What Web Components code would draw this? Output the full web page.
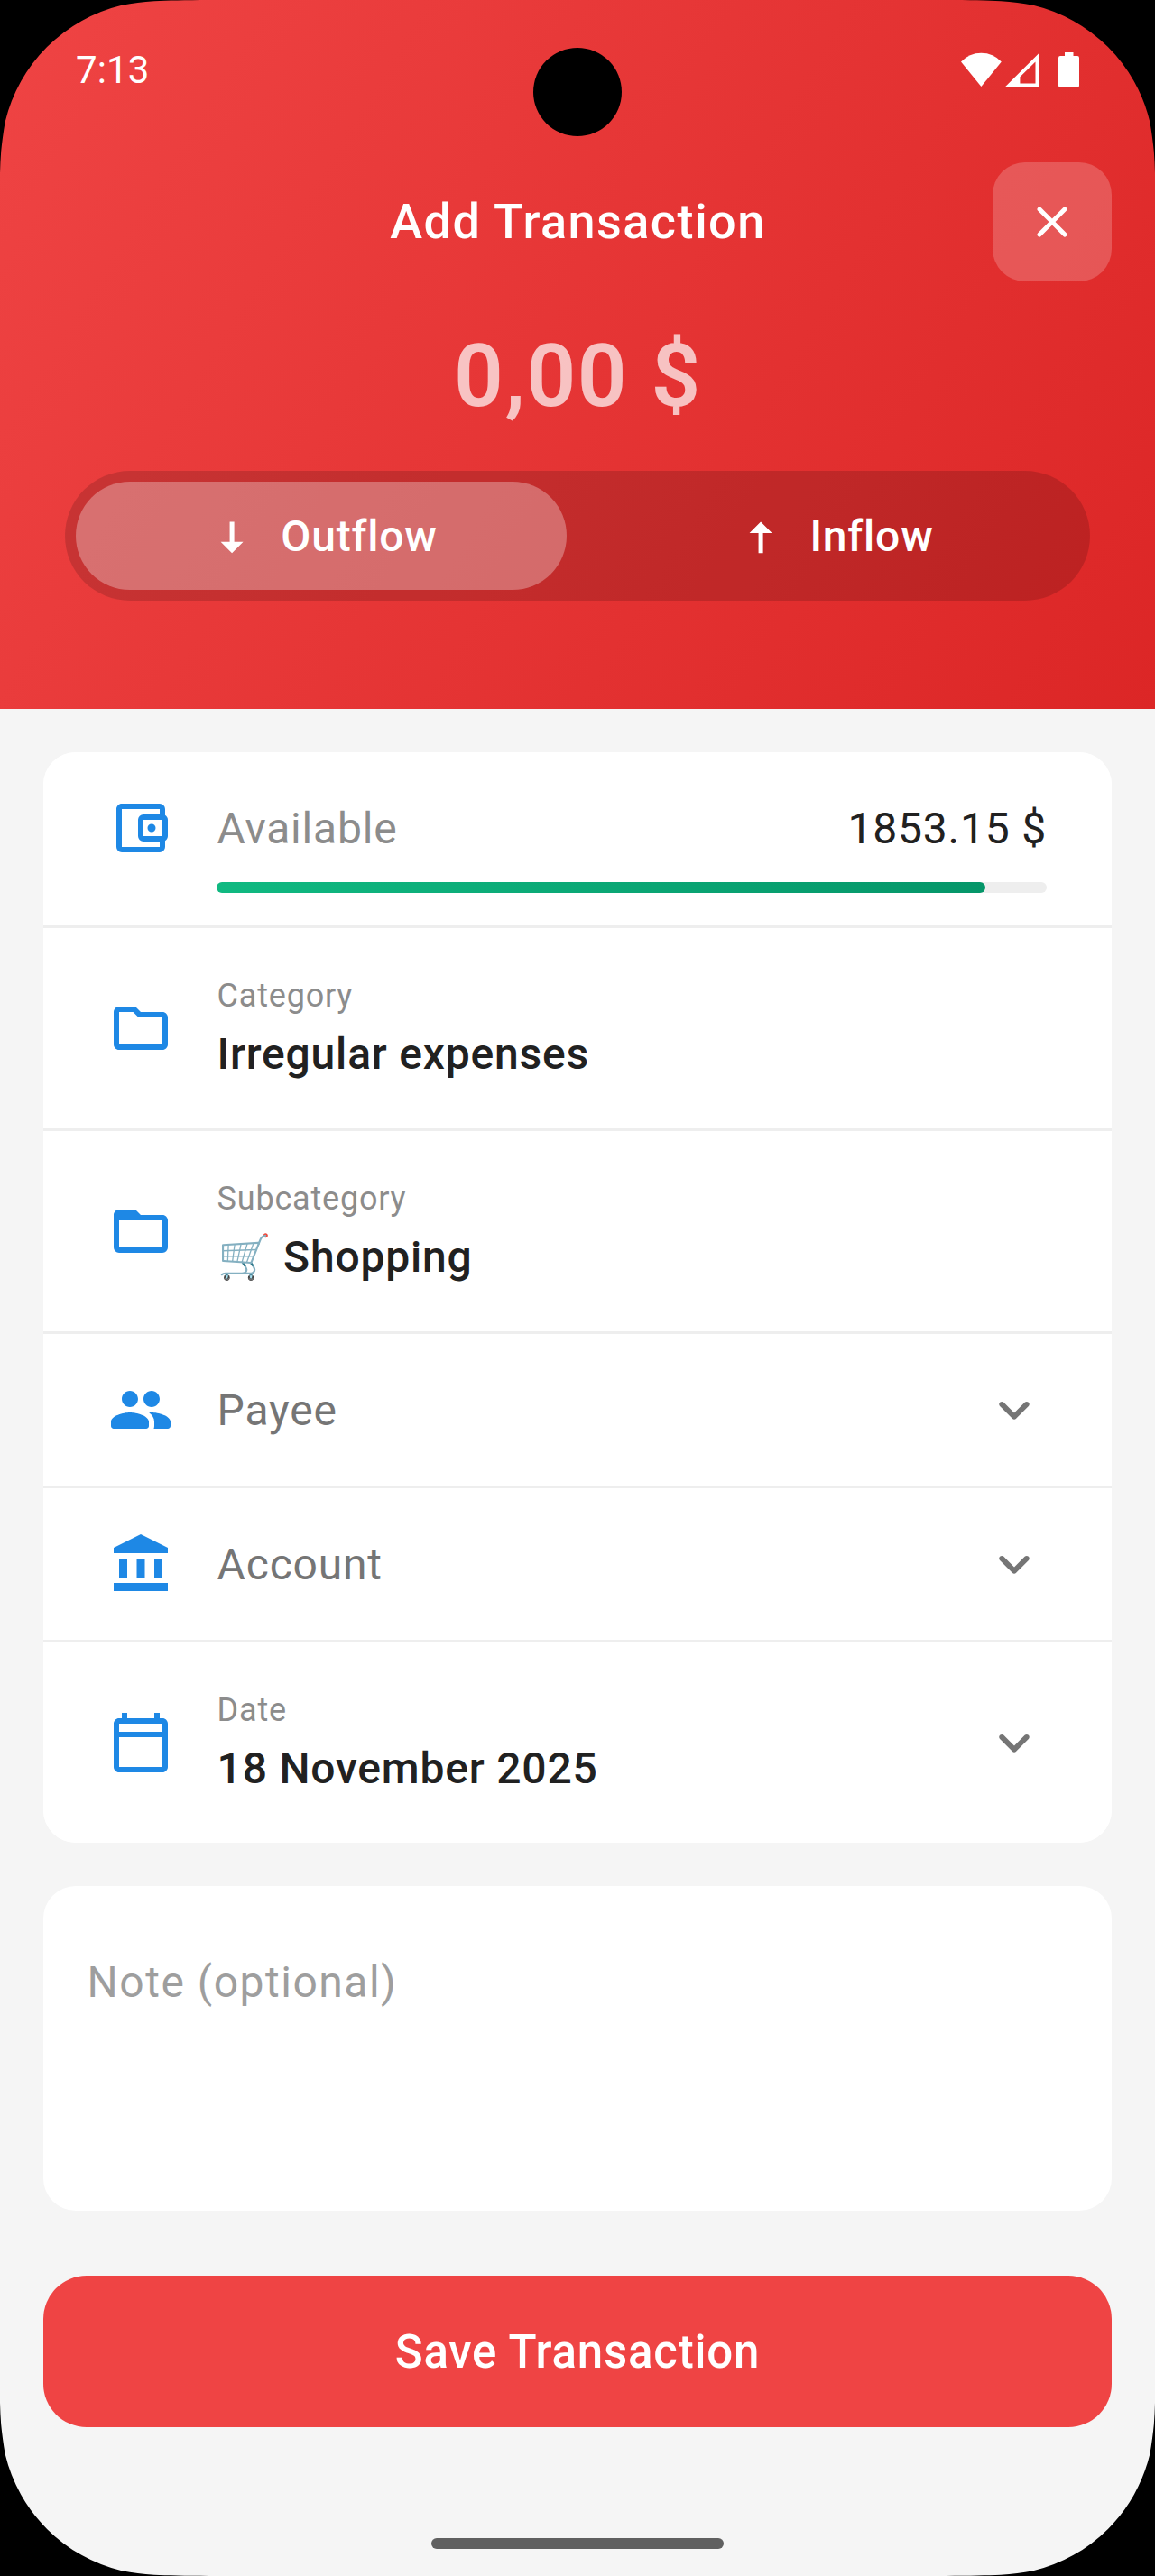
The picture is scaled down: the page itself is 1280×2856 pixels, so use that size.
<!DOCTYPE html>
<html lang="en">
<head>
<meta charset="utf-8">
<title>Add Transaction</title>
<style>
  html, body { margin: 0; background: #000; }
  body { width: 1280px; height: 2856px; overflow: hidden; font-family: Roboto, "Liberation Sans", sans-serif; letter-spacing: .8px; color: #212121; }
</style>
</head>
<body>
<phone-screen>
  <app-header slot="header">
    <status-bar slot="status">7:13</status-bar>
    <span slot="title">Add Transaction</span>
    <span slot="amount">0,00 $</span>
    <toggle-option slot="toggle" icon="arrow-down" selected>Outflow</toggle-option>
    <toggle-option slot="toggle" icon="arrow-up">Inflow</toggle-option>
  </app-header>
  <form-card>
    <balance-row icon="wallet" percent="92.6">Available<span slot="value">1853.15 $</span></balance-row>
    <form-row icon="folder"><span slot="label">Category</span>Irregular expenses</form-row>
    <form-row icon="subfolder"><span slot="label">Subcategory</span>🛒 Shopping</form-row>
    <form-row icon="people" empty arrow>Payee</form-row>
    <form-row icon="bank" empty arrow>Account</form-row>
    <form-row icon="calendar" arrow><span slot="label">Date</span>18 November 2025</form-row>
  </form-card>
  <note-field>Note (optional)</note-field>
  <save-button>Save Transaction</save-button>
</phone-screen>
<script>
const ICONS = {
  'arrow-down': 'M7.03 13.92H11.03V5L13.04 4.97V13.92H17.03L12.03 18.92Z',
  'arrow-up': 'M7.03 9.97H11.03V18.89L13.04 18.92V9.97H17.03L12.03 4.97Z',
  close: 'M18.3 5.71a.996.996 0 0 0-1.41 0L12 10.59 7.11 5.7A.996.996 0 1 0 5.7 7.11L10.59 12 5.7 16.89a.996.996 0 1 0 1.41 1.41L12 13.41l4.89 4.89a.996.996 0 1 0 1.41-1.41L13.41 12l4.89-4.89c.38-.38.38-1.02 0-1.4z',
  wallet: 'M5,3C3.89,3 3,3.9 3,5V19A2,2 0 0,0 5,21H19A2,2 0 0,0 21,19V16.72C21.59,16.37 22,15.74 22,15V9C22,8.26 21.59,7.63 21,7.28V5A2,2 0 0,0 19,3H5M5,5H19V7H13A2,2 0 0,0 11,9V15A2,2 0 0,0 13,17H19V19H5V5M13,9H20V15H13V9M16,10.5A1.5,1.5 0 0,0 14.5,12A1.5,1.5 0 0,0 16,13.5A1.5,1.5 0 0,0 17.5,12A1.5,1.5 0 0,0 16,10.5Z',
  folder: 'M9.17 6l2 2H20v10H4V6h5.17M10 4H4c-1.1 0-1.99.9-1.99 2L2 18c0 1.1.9 2 2 2h16c1.1 0 2-.9 2-2V8c0-1.1-.9-2-2-2h-8l-2-2z',
  subfolder: 'M20,18H4V8H20M20,6H12L10,4H4C2.89,4 2,4.89 2,6V18A2,2 0 0,0 4,20H20A2,2 0 0,0 22,18V8C22,6.89 21.1,6 20,6Z',
  people: 'M16 11c1.66 0 2.99-1.34 2.99-3S17.66 5 16 5s-3 1.34-3 3 1.34 3 3 3zm-8 0c1.66 0 2.99-1.34 2.99-3S9.66 5 8 5 5 6.34 5 8s1.34 3 3 3zm0 2c-2.33 0-7 1.17-7 3.5V18c0 .55.45 1 1 1h12c.55 0 1-.45 1-1v-1.5c0-2.33-4.67-3.5-7-3.5zm8 0c-.29 0-.62.02-.97.05.02.01.03.03.04.04 1.14.83 1.93 1.94 1.93 3.41V18c0 .35-.07.69-.18 1H22c.55 0 1-.45 1-1v-1.5c0-2.33-4.67-3.5-7-3.5z',
  bank: 'M12 1L2 6v2h20V6zM4 10v7h3v-7zM10.5 10v7h3v-7zM17 10v7h3v-7zM2 19h20v3H2z',
  calendar: 'M20 3h-1V1h-2v2H7V1H5v2H4c-1.1 0-2 .9-2 2v16c0 1.1.9 2 2 2h16c1.1 0 2-.9 2-2V5c0-1.1-.9-2-2-2zm0 18H4V10h16v11zm0-13H4V5h16v3z',
  chevron: 'M8.12 9.29L12 13.17l3.88-3.88c.39-.39 1.02-.39 1.41 0 .39.39.39 1.02 0 1.41l-4.59 4.59c-.39.39-1.02.39-1.41 0L6.7 10.7c-.39-.39-.39-1.02 0-1.41.39-.38 1.03-.39 1.42 0z'
};

const define = (name, render) => customElements.define(name, class extends HTMLElement {
  constructor() { super(); this.attachShadow({ mode: 'open' }); }
  connectedCallback() { this.shadowRoot.innerHTML = render(this); }
});

define('md-icon', el => `
  <style>:host{display:block;flex:none;width:72px;height:72px} svg{display:block;width:100%;height:100%;fill:currentColor}</style>
  <svg viewBox="0 0 24 24"><path fill-rule="evenodd" d="${ICONS[el.getAttribute('name')]}"/></svg>`);

define('status-bar', () => `
  <style>
    :host{display:flex;justify-content:space-between;align-items:flex-start;height:132px;box-sizing:border-box;padding:52px 80px 0 84px;color:#fff;font-size:42px;line-height:52px;letter-spacing:.1px}
    svg{display:block;fill:#fff}
  </style>
  <slot></slot>
  <svg width="136" height="50" viewBox="1064 52 136 50">
    <path d="M1087.400 96L1065 68.500Q1074 58.700 1087.400 58.700T1109.800 68.500Z"/>
    <path fill-rule="evenodd" d="M1113.500 96.700L1151.400 59V96.700ZM1130.400 92.400H1147.500V68.400L1130.400 85.200Z"/>
    <path d="M1180 58h9.500v4h4.500q2 0 2 2v31q0 2-2 2h-19q-2 0-2-2V64q0-2 2-2h5z"/>
  </svg>`);

define('toggle-option', el => `
  <style>
    :host{display:flex;flex:1;align-items:center;justify-content:center;gap:24px;height:120px;border-radius:60px;font-size:48px;font-weight:500;line-height:60px}
    :host([selected]){background:rgba(255,255,255,.3)}
    md-icon{width:60px;height:60px;margin-top:3px}
    span{padding-top:1px}
  </style>
  <md-icon name="${el.getAttribute('icon')}"></md-icon><span><slot></slot></span>`);

define('app-header', () => `
  <style>
    :host{display:flex;flex-direction:column;height:786px;color:#fff;background:linear-gradient(121.55deg,#ef4444,#dc2626)}
    .bar{display:grid;grid-template-columns:132px 1fr 132px;align-items:center;margin:48px 48px 0;height:132px}
    .title{grid-column:2;text-align:center;font-size:54px;font-weight:500;line-height:66px;letter-spacing:1.45px;padding-left:1px}
    button{display:flex;align-items:center;justify-content:center;width:132px;height:132px;border:0;padding:0;border-radius:36px;background:rgba(255,255,255,.2);color:#fff}
    button md-icon{width:60px;height:60px}
    .amount{margin-top:49px;padding-left:1px;height:112px;line-height:112px;text-align:center;font-size:96px;font-weight:600;letter-spacing:1.5px;color:rgba(255,255,255,.7)}
    .toggle{display:flex;gap:24px;margin:49px 72px 0;padding:12px;border-radius:72px;background:rgba(0,0,0,.15)}
  </style>
  <slot name="status"></slot>
  <div class="bar"><div class="title"><slot name="title"></slot></div><button aria-label="Close"><md-icon name="close"></md-icon></button></div>
  <div class="amount"><slot name="amount"></slot></div>
  <div class="toggle"><slot name="toggle"></slot></div>`);

define('form-card', () => `
  <style>:host{display:flex;flex-direction:column;gap:3px;border-radius:36px;overflow:hidden;background:linear-gradient(#eee,#eee) center/100% calc(100% - 80px) no-repeat #fff}</style>
  <slot></slot>`);

define('balance-row', el => `
  <style>
    :host{display:flex;height:192px;box-sizing:border-box;padding:48px 72px 0;gap:48px;background:#fff;font-size:48px;line-height:72px}
    md-icon{color:#1e88e5}
    .body{flex:1}
    .line{display:flex;justify-content:space-between;padding:1px 0 0 .5px;color:#8c8c8c}
    .value{color:#212121}
    .track{margin-top:23px;height:12px;border-radius:6px;background:#eee}
    .fill{height:12px;width:${el.getAttribute('percent')}%;border-radius:6px;background:linear-gradient(90deg,#10b981,#059669)}
  </style>
  <md-icon name="${el.getAttribute('icon')}"></md-icon>
  <div class="body"><div class="line"><span><slot></slot></span><span class="value"><slot name="value"></slot></span></div>
  <div class="track"><div class="fill"></div></div></div>`);

define('form-row', el => `
  <style>
    :host{display:flex;align-items:center;height:222px;box-sizing:border-box;padding:0 72px;gap:48px;background:#fff;font-size:48px;line-height:60px;font-weight:500}
    :host([empty]){height:168px;font-weight:400;color:#757575}
    .icon{color:#1e88e5}
    .text{flex:1;display:flex;flex-direction:column;gap:11px;margin-top:-1px;padding-left:.6px}
    :host([empty]) .text{gap:0;margin-top:2px}
    .label{font-size:36px;line-height:48px;font-weight:400;color:#8c8c8c}
    :host([empty]) .label{display:none}
    .chev{color:#757575}
  </style>
  <md-icon class="icon" name="${el.getAttribute('icon')}"></md-icon>
  <div class="text"><div class="label"><slot name="label"></slot></div><div><slot></slot></div></div>
  ${el.hasAttribute('arrow') ? '<md-icon class="chev" name="chevron"></md-icon>' : ''}`);

define('note-field', () => `
  <style>:host{display:block;height:360px;box-sizing:border-box;padding:77px 48px 0 48.6px;border-radius:36px;background:#fff;color:#9e9e9e;font-size:48px;line-height:60px;letter-spacing:1.5px}</style>
  <slot></slot>`);

define('save-button', () => `
  <style>
    :host{display:block}
    button{display:block;width:100%;height:168px;border:0;padding:1px 0 0;border-radius:48px;background:#ef4444;color:#fff;font:500 51px/167px Roboto,"Liberation Sans",sans-serif;letter-spacing:inherit;text-align:center}
  </style>
  <button><slot></slot></button>`);

define('phone-screen', () => {
  const corner = 'M0 0H232C205 .3 185 .5 171 1.2C158 2.2 147 3.6 135 5.7A175 175 0 0 0 5.7 135C3.600 147 2.200 158 1.200 168C.5 176 .3 184 0 192Z';
  return `
  <style>
    :host{display:flex;flex-direction:column;position:relative;width:1280px;height:2856px;background:#f5f5f5}
    main{display:flex;flex-direction:column;gap:48px;padding:48px 48px 0}
    ::slotted(save-button){margin-top:24px}
    .nav{width:324px;height:12px;border-radius:6px;background:#606060;margin:auto auto 30px}
    .mask{position:absolute;inset:0}
  </style>
  <slot name="header"></slot>
  <main><slot></slot></main>
  <div class="nav"></div>
  <svg class="mask" width="1280" height="2856" viewBox="0 0 1280 2856">
    <path d="${corner}"/><path d="${corner}" transform="matrix(-1 0 0 1 1280 0)"/>
    <path d="${corner}" transform="matrix(1 0 0 -1 0 2856)"/><path d="${corner}" transform="matrix(-1 0 0 -1 1280 2856)"/>
    <circle cx="640" cy="102" r="49"/>
  </svg>`;
});
</script>
</body>
</html>
